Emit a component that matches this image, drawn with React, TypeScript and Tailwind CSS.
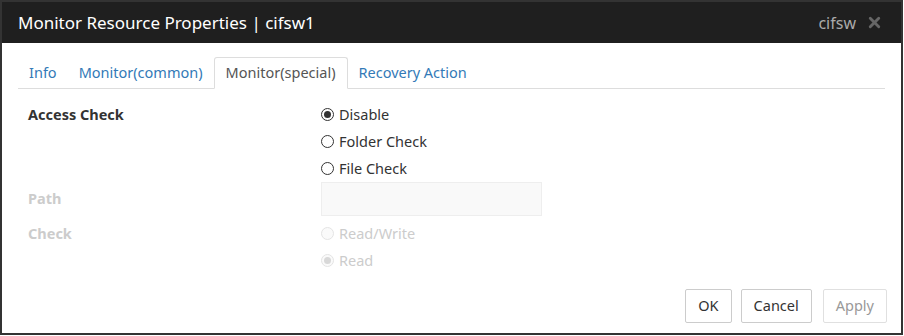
import { X } from "lucide-react";

const font = { fontFamily: '"Noto Sans", "Liberation Sans", sans-serif' };

function Radio({ checked, disabled }: { checked?: boolean; disabled?: boolean }) {
  return (
    <span
      className={`flex h-[13px] w-[13px] items-center justify-center rounded-full border ${
        disabled ? "border-[#e4e4e4] bg-[#fafafa]" : "border-[#333] bg-white"
      }`}
    >
      {checked && (
        <span
          className={`h-[7px] w-[7px] rounded-full ${disabled ? "bg-[#d8d8d8]" : "bg-[#333]"}`}
        />
      )}
    </span>
  );
}

function Option({ label, checked, disabled }: { label: string; checked?: boolean; disabled?: boolean }) {
  return (
    <label className={`flex h-[27px] items-center gap-[5px] ${disabled ? "text-[#ccc]" : "text-[#333]"}`}>
      <Radio checked={checked} disabled={disabled} />
      <span>{label}</span>
    </label>
  );
}

export default function App() {
  const tabs = ["Info", "Monitor(common)", "Monitor(special)", "Recovery Action"];

  return (
    <div className="h-[336px] w-[904px] bg-white text-[14.5px]" style={font}>
      <div className="flex h-[335px] w-[903px] flex-col border-2 border-[#333] bg-white">
        {/* Header */}
        <div className="flex h-[41px] items-center justify-between bg-[#1f1f1f] pl-[16px] pr-[18px]">
          <h1 className="text-[17px] text-white">Monitor Resource Properties | cifsw1</h1>
          <div className="flex items-center gap-[10px]">
            <span className="text-[16px] text-[#aaa]">cifsw</span>
            <X className="h-[17px] w-[17px] text-[#666]" strokeWidth={4} />
          </div>
        </div>

        {/* Tabs */}
        <div className="px-[16px] pt-[14px]">
          <ul className="flex h-[32px] border-b border-[#ddd]">
            {tabs.map((t) => (
              <li
                key={t}
                className={
                  t === "Monitor(special)"
                    ? "-mb-px flex items-center rounded-t-[3px] border border-b-white border-[#ddd] bg-white px-[11px] text-[#555]"
                    : "flex items-center px-[11px] text-[#337ab7]"
                }
              >
                {t}
              </li>
            ))}
          </ul>
        </div>

        {/* Form */}
        <div className="grid grid-cols-[293px_1fr] pl-[26px] pt-[12px]">
          <div className="flex h-[27px] items-center font-bold text-[#333]">Access Check</div>
          <div className="flex flex-col">
            <Option label="Disable" checked />
            <Option label="Folder Check" />
            <Option label="File Check" />
          </div>

          <div className="mb-[5px] flex h-[33px] items-center font-bold text-[#ccc]">Path</div>
          <div className="mb-[5px] h-[33px]">
            <div className="h-[34px] w-[221px] border border-[#eee] bg-[#f9f9f9]" />
          </div>

          <div className="flex h-[27px] items-center font-bold text-[#ccc]">Check</div>
          <div className="flex flex-col">
            <Option label="Read/Write" disabled />
            <Option label="Read" checked disabled />
          </div>
        </div>

        {/* Footer */}
        <div className="mt-auto flex justify-end gap-[9px] pb-[10px] pr-[14px]">
          <button className="h-[34px] rounded-[2px] border border-[#ccc] bg-white px-[12px] text-[#333]">OK</button>
          <button className="h-[34px] rounded-[2px] border border-[#ccc] bg-white px-[12px] text-[#333]">Cancel</button>
          <button className="ml-[2px] h-[34px] rounded-[2px] border border-[#e0e0e0] bg-white px-[12px] text-[#999]">Apply</button>
        </div>
      </div>
    </div>
  );
}
